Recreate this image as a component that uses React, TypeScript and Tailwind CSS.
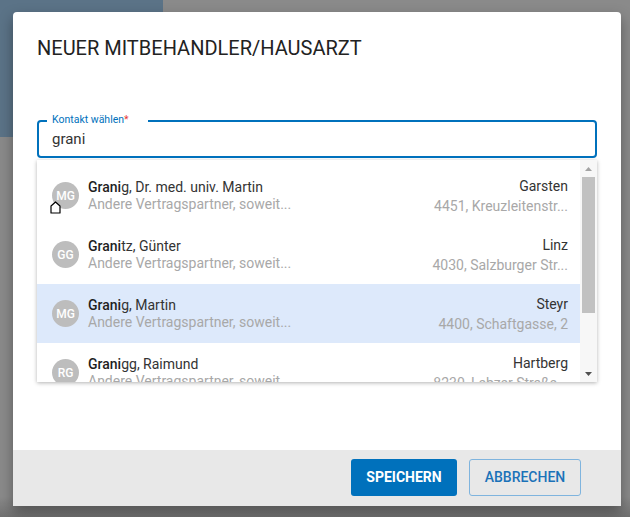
import React from 'react';

type Contact = {
  initials: string;
  rest: string;
  city: string;
  address: string;
  active?: boolean;
};

const CONTACTS: Contact[] = [
  { initials: 'MG', rest: 'g, Dr. med. univ. Martin', city: 'Garsten', address: '4451, Kreuzleitenstr...' },
  { initials: 'GG', rest: 'tz, Günter', city: 'Linz', address: '4030, Salzburger Str...' },
  { initials: 'MG', rest: 'g, Martin', city: 'Steyr', address: '4400, Schaftgasse, 2', active: true },
  { initials: 'RG', rest: 'gg, Raimund', city: 'Hartberg', address: '8230, Lebzer Straße...' },
];

const font = { fontFamily: 'Roboto, "Noto Sans", Arial, sans-serif' };

const ContactRow: React.FC<{ c: Contact }> = ({ c }) => (
  <div className={`h-[59px] shrink-0 flex items-center pl-[15px] pr-[12px] ${c.active ? 'bg-[#dde9fb]' : 'bg-white'}`}>
    <div className="w-[27px] h-[27px] rounded-full bg-[#bdbdbd] text-white text-[12px] font-medium flex items-center justify-center shrink-0">
      {c.initials}
    </div>
    <div className="ml-[9px] flex-1 min-w-0 flex flex-col">
      <div className="text-[14px] leading-[17px] text-[#333]">
        <span className="font-medium text-[#1f1f1f]">Grani</span>
        {c.rest}
      </div>
      <div className="text-[14px] leading-[17px] text-[#a8a8a8]">Andere Vertragspartner, soweit...</div>
    </div>
    <div className="flex flex-col items-end">
      <div className="text-[14px] leading-[20px] text-[#333]">{c.city}</div>
      <div className="text-[14px] leading-[20px] text-[#a8a8a8]">{c.address}</div>
    </div>
  </div>
);

export default function App() {
  return (
    <div className="relative w-[630px] h-[517px] overflow-hidden bg-[#8a8a8a]" style={font}>
      <div className="absolute top-0 left-0 w-[163px] h-[137px] bg-[#5b7387]" />
      <div className="absolute inset-x-0 bottom-0 h-[20px] bg-gradient-to-b from-[#8a8a8a] to-[#707070]" />

      <div className="relative ml-[13px] pt-[12px]">
        <div className="w-[608px] bg-white rounded-t-[4px] shadow-[0_6px_14px_rgba(0,0,0,0.35)] flex flex-col">
          <div className="h-[438px] px-[24px] flex flex-col">
            <h1 className="mt-[24px] text-[20px] leading-[24px] text-[#222] whitespace-nowrap">
              NEUER MITBEHANDLER/HAUSARZT
            </h1>

            <div className="mt-[60px] relative h-[38px] border-2 border-[#0071bc] rounded-[4px] flex items-center pl-[13px]">
              <span className="absolute -top-[9px] left-[8px] w-[101px] bg-white pl-[5px] text-[10.5px] leading-[14px] text-[#0071bc]">
                Kontakt wählen<span className="text-[#e53935]">*</span>
              </span>
              <span className="text-[15px] text-[#333]">grani</span>
            </div>

            <div className="mt-[2px] h-[222px] flex bg-white shadow-[0_1px_4px_rgba(0,0,0,0.3)]">
              <div className="flex-1 pt-[6px] flex flex-col overflow-hidden">
                {CONTACTS.map((c, i) => (
                  <ContactRow key={i} c={c} />
                ))}
              </div>
              <div className="w-[17px] flex flex-col items-center bg-[#f7f7f7]">
                <div className="h-[17px] flex items-center justify-center">
                  <svg width="7" height="4" viewBox="0 0 7 4"><path d="M0 4 L3.5 0 L7 4 Z" fill="#a3a3a3" /></svg>
                </div>
                <div className="w-[13px] h-[136px] bg-[#c1c1c1]" />
                <div className="flex-1" />
                <div className="h-[17px] flex items-center justify-center">
                  <svg width="7" height="4" viewBox="0 0 7 4"><path d="M0 0 L3.5 4 L7 0 Z" fill="#505050" /></svg>
                </div>
              </div>
            </div>
          </div>

          <div className="h-[56px] bg-[#e8e8e8] flex items-start justify-end gap-[12px] pt-[9px] pr-[40px]">
            <button className="w-[106px] h-[37px] rounded-[3px] bg-[#0071bc] text-white text-[14px] font-bold">
              SPEICHERN
            </button>
            <button className="w-[112px] h-[37px] rounded-[3px] border border-[#7fb4de] text-[#1b72b8] text-[14px] font-medium">
              ABBRECHEN
            </button>
          </div>
        </div>
      </div>

      <svg className="absolute left-[50px] top-[201px]" width="11" height="13" viewBox="0 0 11 13">
        <path d="M1 12 L1 5 L5.5 1 L10 5 L10 12 Z" fill="white" stroke="black" strokeWidth="1.2" strokeLinejoin="round" />
      </svg>
    </div>
  );
}
